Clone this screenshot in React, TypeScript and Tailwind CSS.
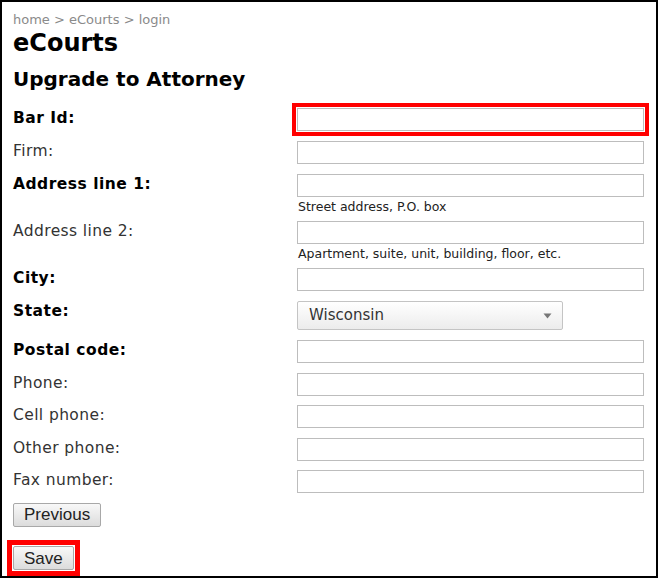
import React from 'react';

interface Field {
  label: string;
  required?: boolean;
  hint?: string;
  highlight?: boolean;
}

const fields: Field[] = [
  { label: 'Bar Id:', required: true, highlight: true },
  { label: 'Firm:' },
  { label: 'Address line 1:', required: true, hint: 'Street address, P.O. box' },
  { label: 'Address line 2:', hint: 'Apartment, suite, unit, building, floor, etc.' },
  { label: 'City:', required: true },
];

const moreFields: Field[] = [
  { label: 'Postal code:', required: true },
  { label: 'Phone:' },
  { label: 'Cell phone:' },
  { label: 'Other phone:' },
  { label: 'Fax number:' },
];

const font = { fontFamily: '"DejaVu Sans", "Open Sans", sans-serif' };
const btnFont = { fontFamily: '"Liberation Sans", Arial, sans-serif' };

const Label: React.FC<{ required?: boolean; children: React.ReactNode }> = ({ required, children }) => (
  <label
    className={`w-[284px] shrink-0 text-[15.5px] leading-[20px] ${
      required ? 'font-bold text-black tracking-[0.5px]' : 'text-[#333] tracking-[0.4px]'
    }`}
  >
    {children}
  </label>
);

const Row: React.FC<{ field: Field }> = ({ field }) => (
  <div className="flex">
    <Label required={field.required}>{field.label}</Label>
    <div className="flex flex-col">
      <input
        type="text"
        className={`w-[347px] h-[23px] border border-[#bdbdbd] bg-white ${
          field.highlight ? 'outline-[4px] outline-solid outline-[#ff0000] outline-offset-1' : 'outline-none'
        }`}
      />
      {field.hint && (
        <span className="text-[12.5px] leading-[13px] text-[#222] mt-[3px] -mb-[2px] pl-px">{field.hint}</span>
      )}
    </div>
  </div>
);

const buttonCls =
  'h-[24px] px-[10px] border border-[#a8a8a8] rounded-[2px] bg-gradient-to-b from-[#f8f8f8] to-[#dcdcdc] text-[17px] leading-none text-[#222]';

export default function App() {
  return (
    <div className="w-[658px] h-[578px] border-2 border-black bg-white pl-[11px] pt-[10px]" style={font}>
      <div className="text-[13px] leading-[16px] text-[#8a8a8a]">home &gt; eCourts &gt; login</div>
      <h1 className="text-[24px] font-bold leading-[28px] text-black mt-[1px]">eCourts</h1>
      <h2 className="text-[20px] font-bold leading-[24px] text-black mt-[10px]">Upgrade to Attorney</h2>

      <div className="flex flex-col gap-[10px] mt-[17px]">
        {fields.map((f) => (
          <Row key={f.label} field={f} />
        ))}
        <div className="flex">
          <Label required>State:</Label>
          <div className="w-[266px] h-[29px] border border-[#c4c4c4] rounded-[2px] bg-gradient-to-b from-white to-[#ececec] flex items-center justify-between pl-[11px] pr-[10px]">
            <span className="text-[15px] text-[#333]">Wisconsin</span>
            <svg width="9" height="6" viewBox="0 0 9 6">
              <path d="M0.5 0.5 L8.5 0.5 L4.5 5.5 Z" fill="#777" />
            </svg>
          </div>
        </div>
        <div className="flex flex-col gap-[9.5px]">
          {moreFields.map((f) => (
            <Row key={f.label} field={f} />
          ))}
          <div>
            <button className={buttonCls} style={btnFont}>
              Previous
            </button>
          </div>
        </div>
        <div className="mt-[3px] -ml-[6px]">
          <div className="inline-block border-[5px] border-[#ff0000] p-px">
            <button className={`${buttonCls} block`} style={btnFont}>
              Save
            </button>
          </div>
        </div>
      </div>
    </div>
  );
}
